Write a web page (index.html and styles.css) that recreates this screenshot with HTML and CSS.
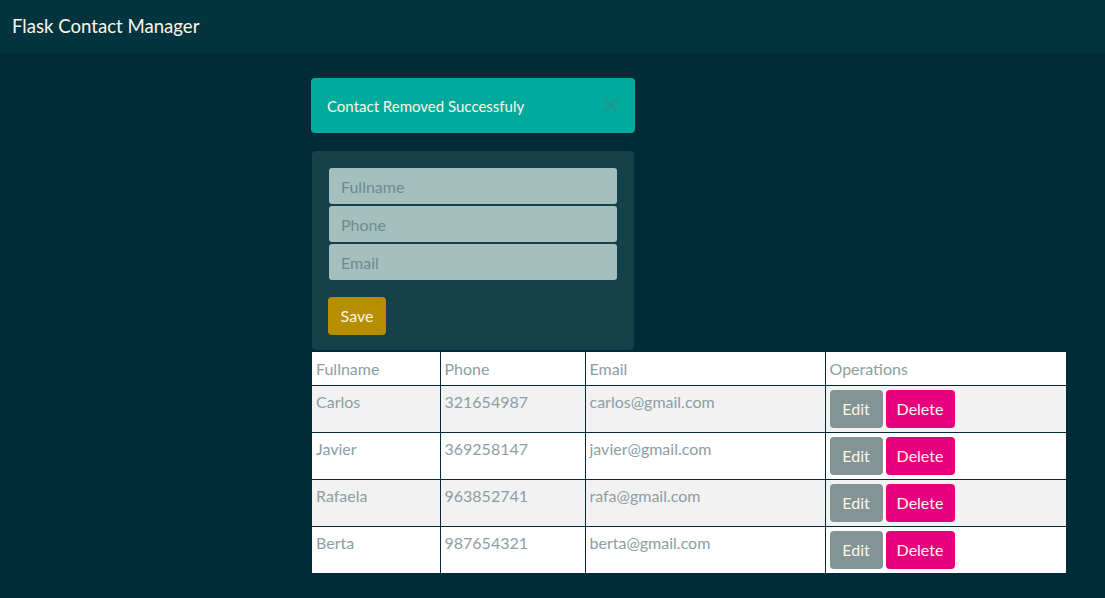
FILE: index.html
```html
<!DOCTYPE html>
<html>
<head>
<meta charset="utf-8">
<link rel="stylesheet" href="styles.css">
</head>
<body>
<nav class="navbar"><span class="brand">Flask Contact Manager</span></nav>
<main class="main">
  <div class="col">
    <div class="alert">
      <span>Contact Removed Successfuly</span>
      <span class="close">
        <svg width="16" height="16" viewBox="0 0 16 16"><path d="M1 1L15 15M15 1L1 15" stroke="currentColor" stroke-width="1.6"/></svg>
      </span>
    </div>
    <div class="card">
      <input class="input" placeholder="Fullname">
      <input class="input" placeholder="Phone">
      <input class="input" placeholder="Email">
      <button class="btn btn-save">Save</button>
    </div>
  </div>
  <table class="table">
    <colgroup><col class="c1"><col class="c2"><col class="c3"><col class="c4"></colgroup>
    <thead>
      <tr><th>Fullname</th><th>Phone</th><th>Email</th><th>Operations</th></tr>
    </thead>
    <tbody>
      <tr class="odd"><td>Carlos</td><td>321654987</td><td>carlos@gmail.com</td><td><button class="btn btn-edit">Edit</button><button class="btn btn-del">Delete</button></td></tr>
      <tr><td>Javier</td><td>369258147</td><td>javier@gmail.com</td><td><button class="btn btn-edit">Edit</button><button class="btn btn-del">Delete</button></td></tr>
      <tr class="odd"><td>Rafaela</td><td>963852741</td><td>rafa@gmail.com</td><td><button class="btn btn-edit">Edit</button><button class="btn btn-del">Delete</button></td></tr>
      <tr><td>Berta</td><td>987654321</td><td>berta@gmail.com</td><td><button class="btn btn-edit">Edit</button><button class="btn btn-del">Delete</button></td></tr>
    </tbody>
  </table>
</main>
</body>
</html>
```
FILE: styles.css
```css
* { box-sizing: border-box; }
html, body { margin: 0; padding: 0; }
body {
  background: #002b37;
  font-family: Lato, "Liberation Sans", sans-serif;
  font-size: 16px;
  line-height: 1.5;
  height: 598px;
  overflow: hidden;
}
.navbar {
  height: 53px;
  background: #01343f;
  display: flex;
  align-items: center;
  padding-left: 12px;
}
.brand {
  color: #fdf6e3;
  font-size: 18.6px;
  padding-top: 1px;
}
.main {
  padding: 25px 0 0 311px;
  display: flex;
  flex-direction: column;
}
.col {
  width: 324px;
  display: flex;
  flex-direction: column;
}
.alert {
  height: 55px;
  background: #00aa9c;
  border-radius: 4px;
  color: #fdf6e3;
  font-size: 15px;
  display: flex;
  align-items: center;
  justify-content: space-between;
  padding: 1px 16px 0 16px;
}
.close {
  color: #2a9087;
  display: flex;
  margin-top: -2px;
}
.card {
  margin: 18px 0 0 1px;
  width: 322px;
  background: #15414b;
  border-radius: 4px;
  padding: 17px 17px 15px 17px;
  display: flex;
  flex-direction: column;
  gap: 2px;
}
.input {
  width: 288px;
  height: 36px;
  background: #a5bfbf;
  border: none;
  border-radius: 3px;
  padding: 0 12px;
  font-family: inherit;
  font-size: 16px;
  color: #5c7d86;
  outline: none;
}
.input::placeholder { color: #6d8a90; }
.btn {
  font-family: inherit;
  font-size: 16px;
  line-height: 1.5;
  border: none;
  border-radius: 4px;
  color: #fdf6e3;
  padding: 7px 12px;
  height: 38px;
  cursor: pointer;
}
.btn-save {
  align-self: flex-start;
  margin: 15px 0 0 -1px;
  background: #b78e00;
  width: 58px;
  padding: 7px 0;
}
.btn-edit { background: #839496; width: 53px; padding: 7px 0; margin-right: 3px; }
.btn-del { background: #e6007e; width: 69px; padding: 7px 0; }
.table {
  margin: 1px 0 0 1px;
  width: 754px;
  table-layout: fixed;
  border-collapse: collapse;
  background: #fff;
  color: #8d9ea3;
}
.table th, .table td {
  border: 1px solid #002b37;
  text-align: left;
  vertical-align: top;
  padding: 4px;
  font-weight: normal;
  font-size: 16px;
}
.table th { height: 34px; padding-top: 5px; }
.table td { height: 47px; padding-top: 4px; }
.table tr.odd td { background: #f2f2f2; }
.table td:first-child, .table th:first-child { border-left: none; }
.c1 { width: 128px; }
.c2 { width: 145px; }
.c3 { width: 240px; }
.c4 { width: 241px; }
```
